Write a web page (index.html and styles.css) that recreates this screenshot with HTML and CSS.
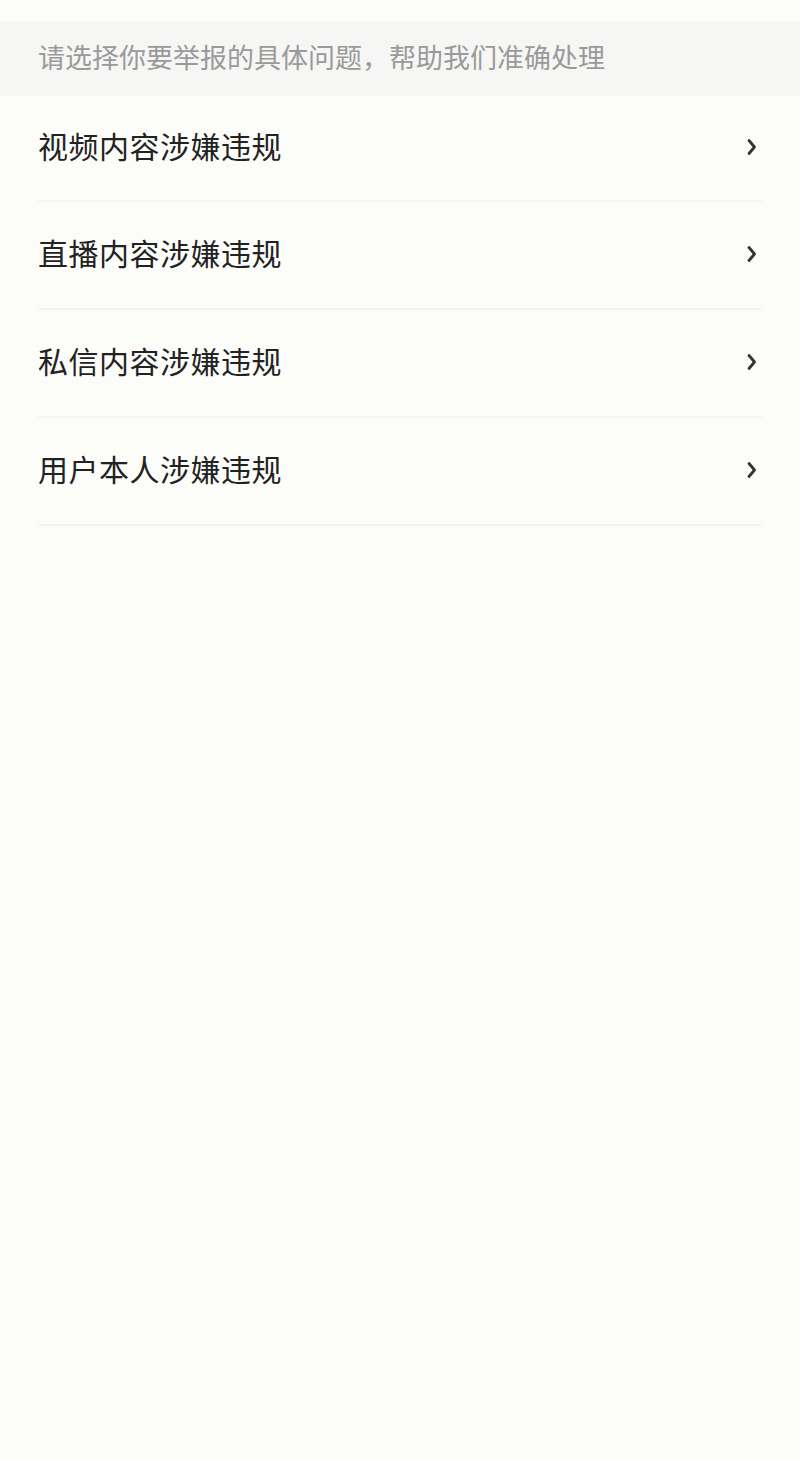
FILE: index.html
```html
<!DOCTYPE html>
<html lang="zh-CN">
<head>
<meta charset="utf-8">
<title>举报</title>
<link rel="stylesheet" href="styles.css">
</head>
<body>
<div class="page">
  <div class="hint">请选择你要举报的具体问题，帮助我们准确处理</div>
  <ul class="list">
    <li class="item"><span class="label">视频内容涉嫌违规</span><svg class="chev" viewBox="0 0 10 18" width="10" height="18"><path d="M2 2.5 L7.5 9 L2 15.5" fill="none" stroke="#333333" stroke-width="2.8" stroke-linecap="round" stroke-linejoin="round"/></svg></li>
    <li class="item"><span class="label">直播内容涉嫌违规</span><svg class="chev" viewBox="0 0 10 18" width="10" height="18"><path d="M2 2.5 L7.5 9 L2 15.5" fill="none" stroke="#333333" stroke-width="2.8" stroke-linecap="round" stroke-linejoin="round"/></svg></li>
    <li class="item"><span class="label">私信内容涉嫌违规</span><svg class="chev" viewBox="0 0 10 18" width="10" height="18"><path d="M2 2.5 L7.5 9 L2 15.5" fill="none" stroke="#333333" stroke-width="2.8" stroke-linecap="round" stroke-linejoin="round"/></svg></li>
    <li class="item"><span class="label">用户本人涉嫌违规</span><svg class="chev" viewBox="0 0 10 18" width="10" height="18"><path d="M2 2.5 L7.5 9 L2 15.5" fill="none" stroke="#333333" stroke-width="2.8" stroke-linecap="round" stroke-linejoin="round"/></svg></li>
  </ul>
</div>
</body>
</html>
```

FILE: styles.css
```css
html, body {
  margin: 0;
  padding: 0;
  background: #fcfcf9;
}
body {
  font-family: "Noto Sans CJK SC", "Noto Sans", sans-serif;
  width: 800px;
  height: 1461px;
}
.page {
  padding-top: 21px;
}
.hint {
  height: 75px;
  box-sizing: border-box;
  background: #f6f6f5;
  color: #9a9a9a;
  font-size: 27px;
  line-height: 71px;
  padding-left: 38px;
}
.list {
  list-style: none;
  margin: 0;
  padding: 0 38px;
}
.item {
  height: 106px;
  display: flex;
  align-items: center;
  justify-content: space-between;
  border-bottom: 2px solid #f4f4f1;
}
.item:first-child {
  height: 104px;
}
.label {
  font-size: 30px;
  color: #222222;
  letter-spacing: 0.5px;
  padding-bottom: 6px;
}
.chev {
  margin-right: 5px;
  margin-bottom: 2px;
  display: block;
}
```
